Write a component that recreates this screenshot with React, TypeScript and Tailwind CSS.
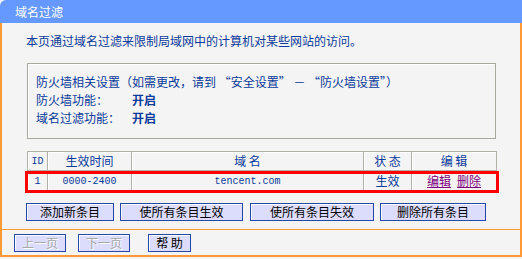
export default function App() {
  const cjk = "font-['Noto_Sans_CJK_SC',sans-serif]";
  const mono = "font-['Liberation_Mono',monospace]";
  const th = "border border-[#b0b0a8] shadow-[inset_1px_1px_0_#ffffff] text-center font-normal p-0";
  const btn =
    "h-[18px] border border-[#2448a8] bg-[#dcdcfc] text-[12px] leading-[16px] flex items-center justify-center shadow-[inset_1px_1px_0_#ffffff]";
  return (
    <div lang="zh-CN" className={`w-[522px] h-[259px] bg-[#f4f4f4] text-[12px] ${cjk}`}>
      <div className="h-[23px] bg-[#6699ff] rounded-tl-[6px] pl-[15px] flex items-center text-white text-[12px]">
        域名过滤
      </div>
      <div className="border-x-2 border-b-2 border-[#ff9933]">
        <div className="h-[206px] pl-[24px] pt-[10px] flex flex-col text-[#0a3a9a]">
          <div className="leading-[16px] h-[16px]">本页通过域名过滤来限制局域网中的计算机对某些网站的访问。</div>
          <div className="mt-[14px] ml-[1px] w-[469px] h-[76px] border border-[#a8a8a0] shadow-[inset_1px_1px_0_#ffffff] pt-[9px] pl-[8px] leading-[18px]">
            <div className="whitespace-pre">防火墙相关设置（如需更改，请到 “安全设置” － “防火墙设置”）</div>
            <div className="flex">
              <span className="w-[96px]">防火墙功能：</span>
              <span className="font-bold">开启</span>
            </div>
            <div className="flex">
              <span className="w-[96px]">域名过滤功能：</span>
              <span className="font-bold">开启</span>
            </div>
          </div>
          <div className="relative mt-[12px] ml-[1px] w-[469px]">
            <table className="table-fixed border-collapse w-[469px]">
              <colgroup>
                <col className="w-[20px]" />
                <col className="w-[84px]" />
                <col className="w-[232px]" />
                <col className="w-[48px]" />
                <col className="w-[85px]" />
              </colgroup>
              <thead>
                <tr className="h-[19px]">
                  <th className={`${th} ${mono} text-[10px]`}>ID</th>
                  <th className={th}>生效时间</th>
                  <th className={th}>域 名</th>
                  <th className={th}>状 态</th>
                  <th className={th}>编 辑</th>
                </tr>
              </thead>
              <tbody>
                <tr className="h-[21px]">
                  <td className={`${th} ${mono} text-[10px]`}>1</td>
                  <td className={`${th} ${mono} text-[10px]`}>0000-2400</td>
                  <td className={`${th} ${mono} text-[10px]`}>tencent.com</td>
                  <td className={th}>生效</td>
                  <td className={th}>
                    <span className="text-[#800080] underline mr-[6px]">编辑</span>
                    <span className="text-[#800080] underline">删除</span>
                  </td>
                </tr>
              </tbody>
            </table>
            <div className="absolute left-[-2px] top-[20px] w-[474px] h-[22px] border-[3px] border-[#ff0000] pointer-events-none" />
          </div>
          <div className="mt-[11px] flex text-black">
            <div className={`${btn} w-[88px]`}>添加新条目</div>
            <div className={`${btn} w-[123px] ml-[6px]`}>使所有条目生效</div>
            <div className={`${btn} w-[124px] ml-[7px]`}>使所有条目失效</div>
            <div className={`${btn} w-[106px] ml-[6px]`}>删除所有条目</div>
          </div>
        </div>
        <div className="border-t border-[#ff9933] h-[26px] pl-[12px] pt-[4px] flex">
          <div className={`${btn} w-[52px] text-[#a8a8a8] [text-shadow:1px_1px_0_#ffffff]`}>上一页</div>
          <div className={`${btn} w-[52px] ml-[12px] text-[#a8a8a8] [text-shadow:1px_1px_0_#ffffff]`}>下一页</div>
          <div className={`${btn} w-[43px] ml-[18px] text-black`}>帮 助</div>
        </div>
      </div>
    </div>
  );
}
